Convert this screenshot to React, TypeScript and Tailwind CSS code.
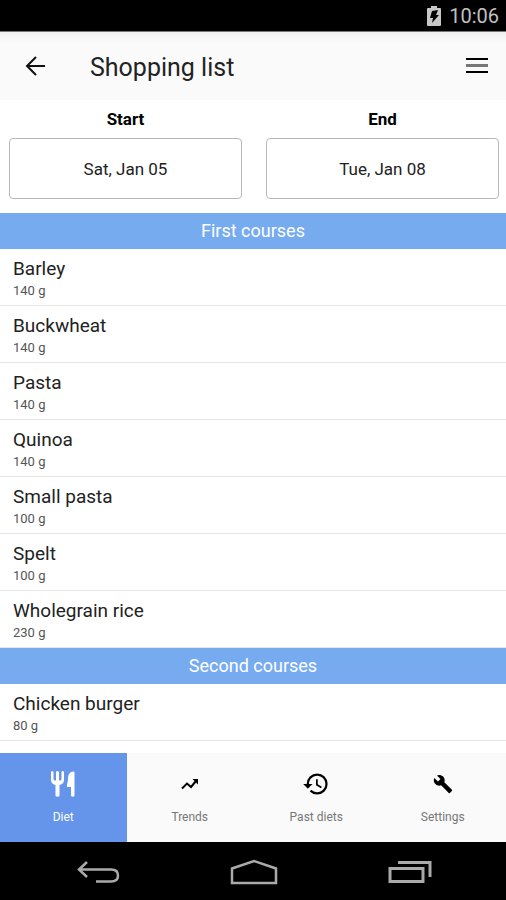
import React from "react";
import { MdBuild, MdHistory } from "react-icons/md";

type Item = { name: string; amount: string };
type Course = { title: string; items: Item[] };

const courses: Course[] = [
  {
    title: "First courses",
    items: [
      { name: "Barley", amount: "140 g" },
      { name: "Buckwheat", amount: "140 g" },
      { name: "Pasta", amount: "140 g" },
      { name: "Quinoa", amount: "140 g" },
      { name: "Small pasta", amount: "100 g" },
      { name: "Spelt", amount: "100 g" },
      { name: "Wholegrain rice", amount: "230 g" },
    ],
  },
  {
    title: "Second courses",
    items: [{ name: "Chicken burger", amount: "80 g" }],
  },
];

function BatteryIcon() {
  return (
    <svg width="14" height="20" viewBox="0 0 14 20" aria-hidden="true">
      <path d="M4 0h6v2h3q1 0 1 1v16q0 1-1 1H1q-1 0-1-1V3q0-1 1-1h3z" fill="#c8c8c8" />
      <path d="M5 5l6-1-2 5h3l-7 8 1-5H3z" fill="#000" />
    </svg>
  );
}

function CutleryIcon() {
  return (
    <svg width="24" height="26" viewBox="0 0 24 26" fill="currentColor" aria-hidden="true">
      <path d="M0 1q1.200-2 2.500 0v7q0 1.500 1.500 1.500h1V1q1.500-2 3 0v8.500h1q1.500 0 1.500-1.500V1q1.200-2 2.500 0v8q0 4-4.500 5v11q-2 1.500-4 0V14Q0 13 0 9z" />
      <path d="M20 1q3-1 3.500 0v24q-1.500 1.500-3.500 0v-9h-4v-3q1-2 1-6 0-4 3-6z" />
    </svg>
  );
}

function TrendsIcon() {
  return (
    <svg width="18" height="12" viewBox="0 0 18 12" aria-hidden="true">
      <path d="M1 10.500l5-5 4 3.500 5-6" fill="none" stroke="currentColor" strokeWidth="2" />
      <path d="M11.500 1H17v5.500z" fill="currentColor" />
    </svg>
  );
}

const tabs = [
  { label: "Diet", icon: <CutleryIcon />, active: true },
  { label: "Trends", icon: <TrendsIcon />, active: false },
  { label: "Past diets", icon: <MdHistory size={28} />, active: false },
  { label: "Settings", icon: <MdBuild size={20} />, active: false },
];

function DateField({ id, label, value }: { id: string; label: string; value: string }) {
  return (
    <div className="flex flex-1 flex-col">
      <label htmlFor={id} className="pt-[7px] text-center text-[17px] leading-6 font-bold">
        {label}
      </label>
      <button
        id={id}
        type="button"
        className="mt-[7px] h-[61px] rounded-[4px] border border-[#b8b8b8] bg-white text-[17px] leading-6 text-[#222]"
      >
        {value}
      </button>
    </div>
  );
}

function CourseSection({ title, items }: Course) {
  return (
    <section>
      <h2 className="h-9 bg-[#76abf0] text-center text-[18px] leading-9 text-white">{title}</h2>
      <ul>
        {items.map((item) => (
          <li key={item.name} className="border-b border-[#e6e6e6] px-[13px] pt-2 pb-1">
            <p className="text-[19px] leading-6 text-[#222]">{item.name}</p>
            <p className="text-[13px] leading-5 text-[#555]">{item.amount}</p>
          </li>
        ))}
      </ul>
    </section>
  );
}

export default function App() {
  return (
    <div className="flex h-screen flex-col bg-white font-[Roboto,sans-serif] text-black">
      <div className="flex h-8 shrink-0 items-center justify-end gap-2 border-b border-[#777] bg-black pr-[7px] text-[20px] leading-6 text-[#c0c0c0]">
        <BatteryIcon />
        <span>10:06</span>
      </div>

      <header className="flex h-[68px] shrink-0 items-center bg-[#fafafa] bg-linear-to-b from-[#f0f0f0] to-[#fafafa] to-15% pr-[17px] pl-6">
        <button type="button" aria-label="Back" className="mr-11">
          <svg width="22" height="20" viewBox="0 0 22 20" fill="none" stroke="#111" strokeWidth="2" aria-hidden="true">
            <path d="M21 10H3M12 1l-9 9 9 9" />
          </svg>
        </button>
        <h1 className="flex-1 pt-1 text-[25px] leading-8 text-[#222]">Shopping list</h1>
        <button type="button" aria-label="Menu">
          <svg width="24" height="16" viewBox="0 0 24 16" aria-hidden="true">
            <path d="M1 0h22v2H1zM1 13h22v2H1z" fill="#000" />
            <path d="M1 6h22v3H1z" fill="#777" />
          </svg>
        </button>
      </header>

      <main className="min-h-0 flex-1 overflow-hidden">
        <div className="flex gap-6 pr-[7px] pb-3.5 pl-[9px]">
          <DateField id="start" label="Start" value="Sat, Jan 05" />
          <DateField id="end" label="End" value="Tue, Jan 08" />
        </div>
        {courses.map((course) => (
          <CourseSection key={course.title} {...course} />
        ))}
      </main>

      <nav className="grid h-[89px] shrink-0 grid-cols-4 bg-[#fafafa]">
        {tabs.map((tab) => (
          <button
            key={tab.label}
            type="button"
            className={
              tab.active
                ? "flex flex-col items-center bg-[#6495eb] pt-4 text-white"
                : "flex flex-col items-center pt-4 text-black"
            }
          >
            <span className="flex h-[30px] items-center">{tab.icon}</span>
            <span
              className={
                tab.active
                  ? "mt-2 text-[12px] leading-5 text-white"
                  : "mt-2 text-[12px] leading-5 text-[#777]"
              }
            >
              {tab.label}
            </span>
          </button>
        ))}
      </nav>

      <div className="flex h-[58px] shrink-0 items-center justify-center gap-[110px] bg-black pt-0.5 pl-0.5">
        <button type="button" aria-label="System back">
          <svg width="44" height="24" viewBox="0 0 44 24" fill="none" stroke="#aaa" strokeWidth="2.500" aria-hidden="true">
            <path d="M11 2L3 9.500l8 7.500M3 9.500h32q7 0 7 6t-7 6H20" />
          </svg>
        </button>
        <button type="button" aria-label="Home">
          <svg width="48" height="26" viewBox="0 0 48 26" fill="none" stroke="#aaa" strokeWidth="2.500" aria-hidden="true">
            <path d="M2 24V9.500L24 2l22 7.500V24z" />
          </svg>
        </button>
        <button type="button" aria-label="Recent apps">
          <svg width="44" height="24" viewBox="0 0 44 24" fill="none" stroke="#aaa" strokeWidth="3" aria-hidden="true">
            <path d="M2 8.500h33v13H2zM10 2.500h32V17" />
          </svg>
        </button>
      </div>
    </div>
  );
}
